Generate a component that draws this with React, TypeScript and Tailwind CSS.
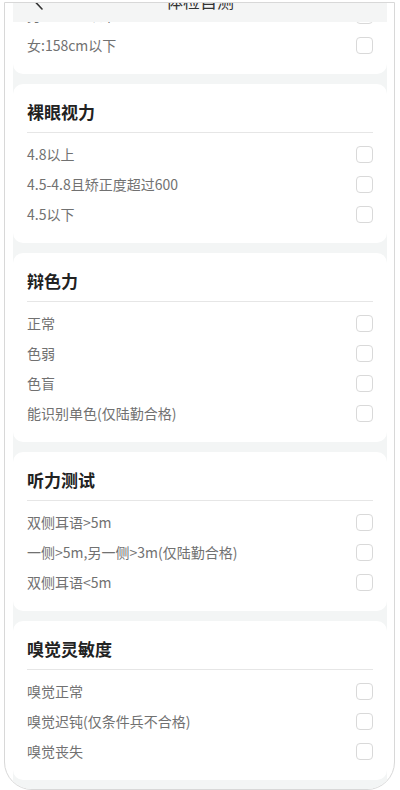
import React from 'react';

type Section = {
  title: string;
  options: string[];
};

const sections: Section[] = [
  { title: '裸眼视力', options: ['4.8以上', '4.5-4.8且矫正度超过600', '4.5以下'] },
  { title: '辩色力', options: ['正常', '色弱', '色盲', '能识别单色(仅陆勤合格)'] },
  { title: '听力测试', options: ['双侧耳语>5m', '一侧>5m,另一侧>3m(仅陆勤合格)', '双侧耳语<5m'] },
  { title: '嗅觉灵敏度', options: ['嗅觉正常', '嗅觉迟钝(仅条件兵不合格)', '嗅觉丧失'] },
];

const OptionRow: React.FC<{ label: string }> = ({ label }) => (
  <div className="flex items-center justify-between h-[30px]">
    <span className="text-[14px] leading-[20px] text-[#717171]">{label}</span>
    <span className="w-[17px] h-[17px] rounded-[4px] border border-[#d9d9d9] bg-white" />
  </div>
);

const App: React.FC = () => {
  return (
    <div
      className="w-[400px] h-[790px] bg-white overflow-hidden"
      style={{ fontFamily: '"Noto Sans CJK SC", "Noto Sans", sans-serif' }}
    >
      <div className="mt-[2px] ml-[4px] w-[391px] h-[788px] border border-[#d8d8d8] rounded-b-[28px] overflow-hidden relative bg-white">
        {/* Header (scrolled, partly off screen) */}
        <div className="absolute top-0 left-[8px] w-[374px] h-[19px] bg-[#f4f5f5] z-10">
          <span className="absolute left-1/2 -translate-x-1/2 top-[-12px] text-[17px] leading-[20px] text-[#333333]">
            体检自测
          </span>
          <svg className="absolute left-[18px] top-[-12px]" width="14" height="20" viewBox="0 0 14 20">
            <path d="M11 1 L3 9.5 L11 18" fill="none" stroke="#333" strokeWidth="1.6" strokeLinecap="round" />
          </svg>
        </div>

        {/* Content column */}
        <div className="ml-[8px] w-[374px] bg-[#f3f5f5] flex flex-col gap-[10px] mt-[-3px] pb-[20px]">
          {/* Height card (top cut off) */}
          <div className="bg-white rounded-[10px] px-[14px] pb-[14px]">
            <OptionRow label="男:162cm以下" />
            <OptionRow label="女:158cm以下" />
          </div>

          {sections.map(section => (
            <div key={section.title} className="bg-white rounded-[10px] px-[14px] pt-[18px] pb-[14px]">
              <h3 className="text-[17px] leading-[20px] font-bold text-[#222222]">{section.title}</h3>
              <div className="h-px bg-[#e6e6e6] mt-[10px] mb-[6px]" />
              {section.options.map(opt => (
                <OptionRow key={opt} label={opt} />
              ))}
            </div>
          ))}
        </div>
      </div>
    </div>
  );
};

export default App;
